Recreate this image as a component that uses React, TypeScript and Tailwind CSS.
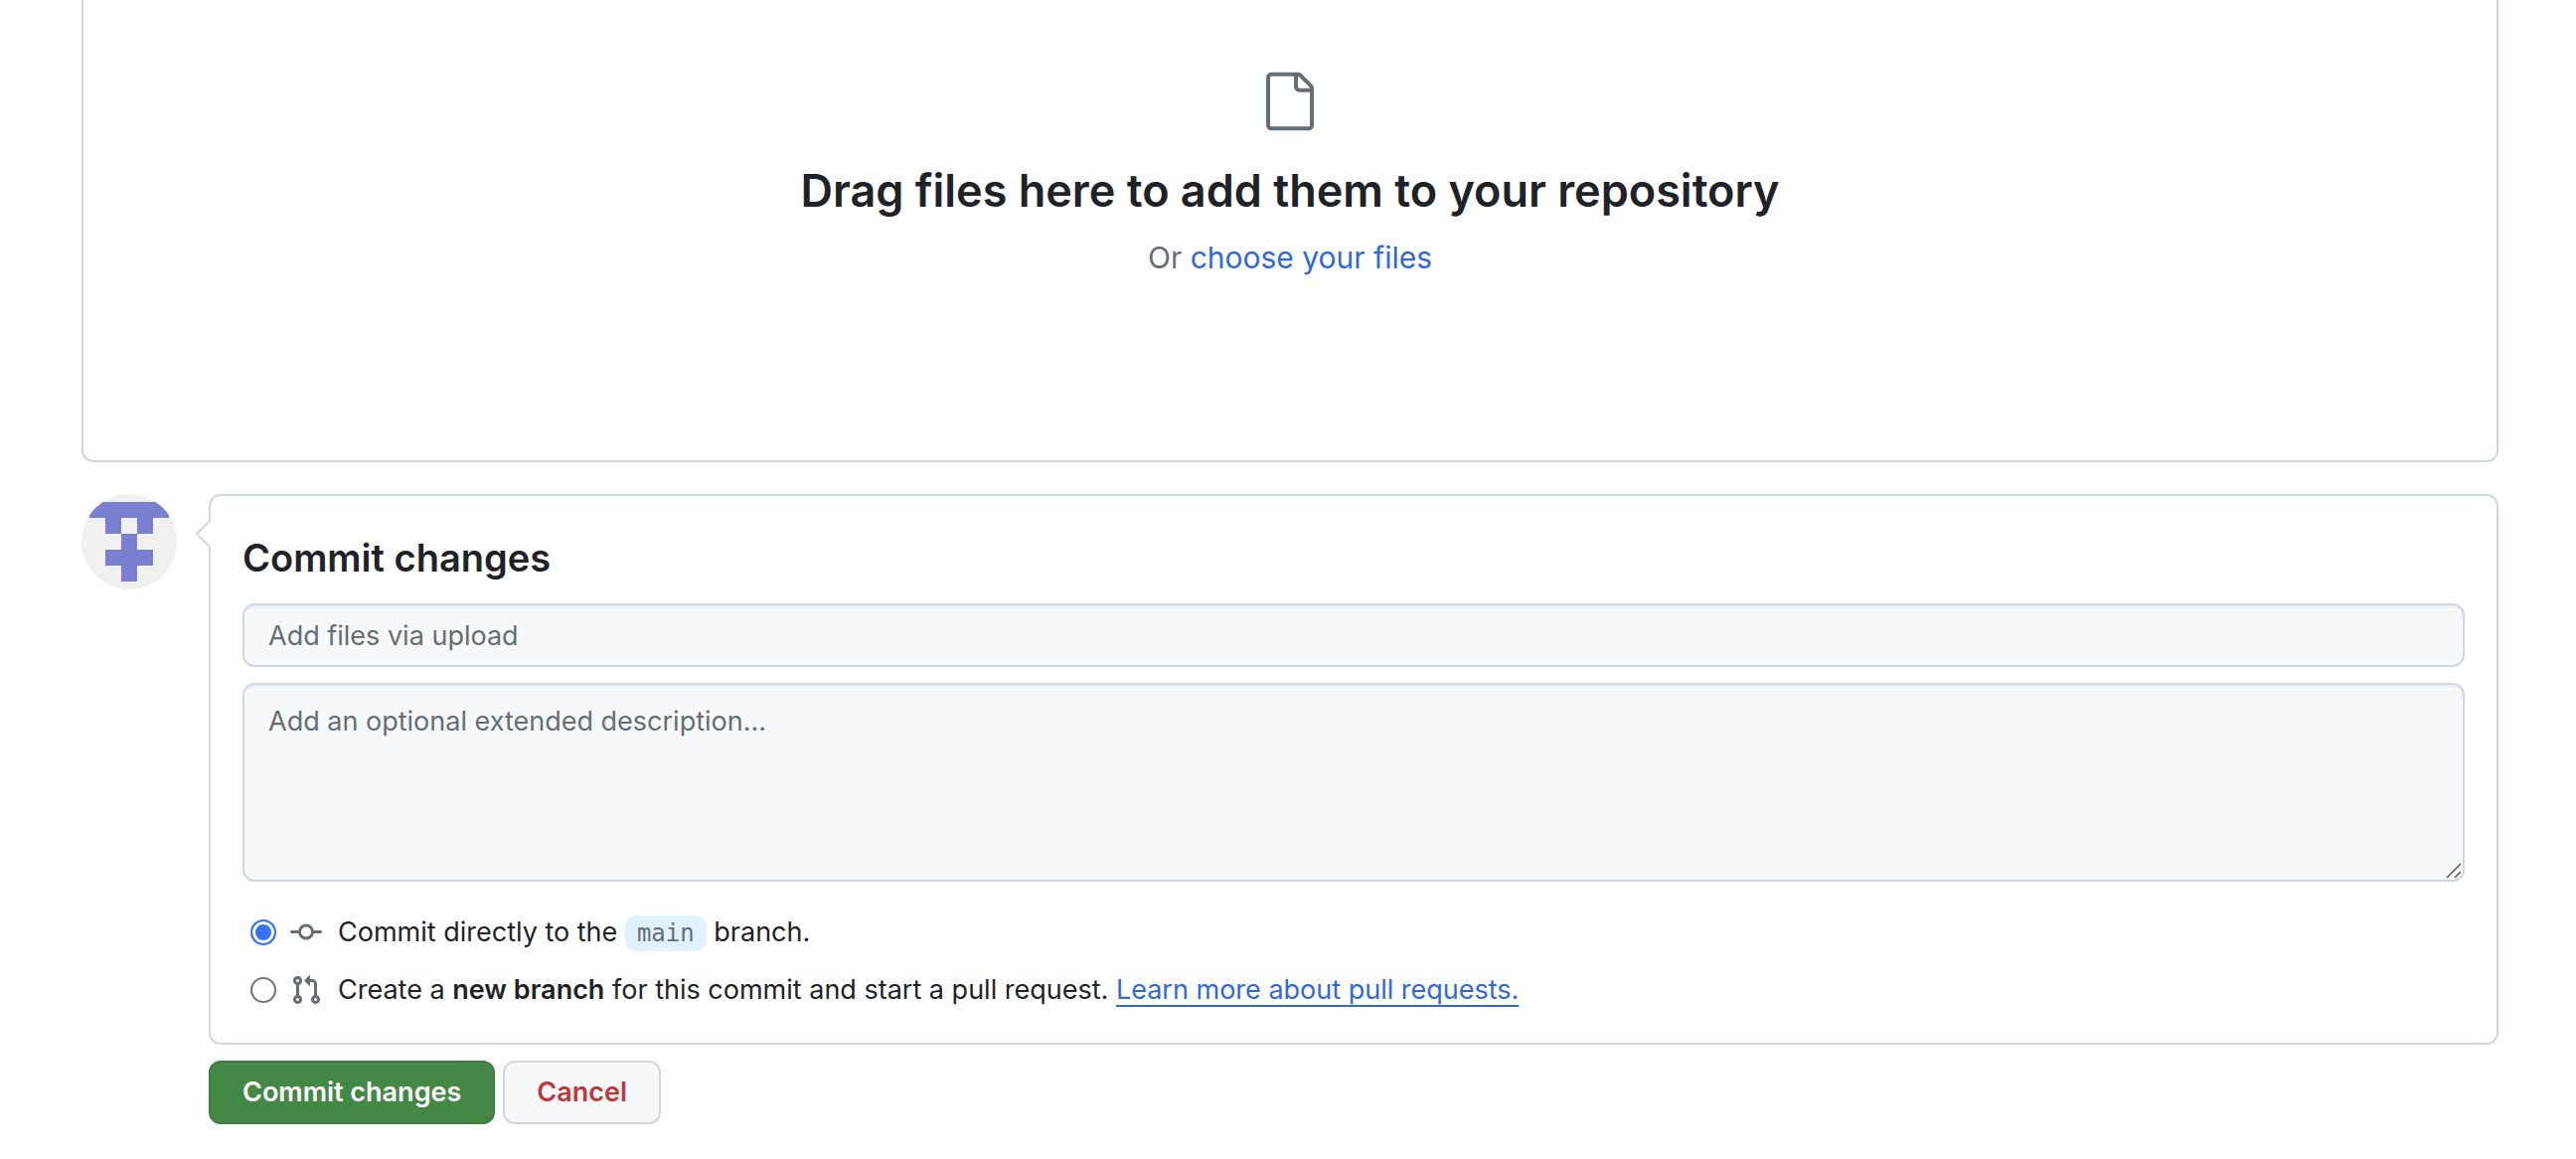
import { useState } from "react";
import type { ReactNode } from "react";

const IDENTICON = ["11111", "01010", "00100", "01110", "00100"];

function FileIcon() {
  return (
    <svg viewBox="0 0 24 24" className="size-16 fill-[#656d76]" aria-hidden="true">
      <path d="M3 3a2 2 0 0 1 2-2h9.982a2 2 0 0 1 1.414.586l4.018 4.018A2 2 0 0 1 21 7.018V21a2 2 0 0 1-2 2H5a2 2 0 0 1-2-2V3Zm2-.5a.5.5 0 0 0-.5.5v18a.5.5 0 0 0 .5.5h14a.5.5 0 0 0 .5-.5V8.5h-4a2 2 0 0 1-2-2v-4H5Zm10 0v4a.5.5 0 0 0 .5.5h4a.5.5 0 0 0-.146-.336l-4.018-4.018A.5.5 0 0 0 15 2.5Z" />
    </svg>
  );
}

function CommitIcon() {
  return (
    <svg viewBox="0 0 16 16" className="size-8 shrink-0 fill-[#656d76]" aria-hidden="true">
      <path d="M11.93 8.5a4.002 4.002 0 0 1-7.86 0H.75a.75.75 0 0 1 0-1.5h3.32a4.002 4.002 0 0 1 7.86 0h3.32a.75.75 0 0 1 0 1.5Zm-1.43-.75a2.5 2.5 0 1 0-5 0 2.5 2.5 0 0 0 5 0Z" />
    </svg>
  );
}

function PullRequestIcon() {
  return (
    <svg viewBox="0 0 16 16" className="size-8 shrink-0 fill-[#656d76]" aria-hidden="true">
      <path d="M1.5 3.25a2.25 2.25 0 1 1 3 2.122v5.256a2.251 2.251 0 1 1-1.5 0V5.372A2.25 2.25 0 0 1 1.5 3.25Zm5.677-.177L9.573.677A.25.25 0 0 1 10 .854V2.5h1A2.5 2.5 0 0 1 13.5 5v5.628a2.251 2.251 0 1 1-1.5 0V5a1 1 0 0 0-1-1h-1v1.646a.25.25 0 0 1-.427.177L7.177 3.427a.25.25 0 0 1 0-.354ZM3.75 2.5a.75.75 0 1 0 0 1.5.75.75 0 0 0 0-1.5Zm0 9.5a.75.75 0 1 0 0 1.5.75.75 0 0 0 0-1.5Zm8.25.75a.75.75 0 1 0 1.5 0 .75.75 0 0 0-1.5 0Z" />
    </svg>
  );
}

function Avatar() {
  return (
    <svg viewBox="0 0 96 96" className="size-24 shrink-0 rounded-full bg-[#f0f0f0]" role="img" aria-label="Your avatar">
      {IDENTICON.flatMap((row, y) =>
        [...row].map((cell, x) =>
          cell === "1" ? (
            <rect key={`${x}-${y}`} x={8 + x * 16} y={8 + y * 16} width="16" height="16" fill="#7a80d0" />
          ) : null,
        ),
      )}
    </svg>
  );
}

function Choice({ id, checked, onSelect, icon, children }: {
  id: string;
  checked: boolean;
  onSelect: () => void;
  icon: ReactNode;
  children: ReactNode;
}) {
  return (
    <div className="flex items-center pl-2">
      <input
        type="radio"
        name="commit-target"
        id={id}
        checked={checked}
        onChange={onSelect}
        className="mr-[14px] size-[26px] shrink-0 appearance-none rounded-full border-2 border-[#767676] bg-white checked:border-[#3574f6] checked:bg-[#3574f6] checked:shadow-[inset_0_0_0_3px_#ffffff]"
      />
      {icon}
      <label htmlFor={id} className="ml-4 leading-[42px]">
        {children}
      </label>
    </div>
  );
}

export default function App() {
  const [target, setTarget] = useState("direct");

  return (
    <main className="bg-white pr-[78px] pl-[82px] font-[family-name:Inter,sans-serif] text-[27px] text-[#1f2328]">
      <section className="flex flex-col items-center rounded-b-xl border-2 border-t-0 border-[#d0d7de] pt-[70px] pb-[180px] text-center">
        <FileIcon />
        <h2 className="mt-7 mb-[13px] text-[45px] leading-[60px] font-semibold">
          Drag files here to add them to your repository
        </h2>
        <p className="text-[30px] leading-[48px] text-[#656d76]">
          Or{" "}
          <a href="#files" className="text-[#2f68dc]">
            choose your files
          </a>
        </p>
      </section>

      <form className="mt-8 flex items-start gap-8" onSubmit={(e) => e.preventDefault()}>
        <Avatar />
        <div className="min-w-0 flex-1">
          <div className="relative rounded-xl border-2 border-[#d0d7de] p-8">
            <svg viewBox="0 0 16 30" className="absolute top-[23px] -left-[16px] h-[30px] w-[16px]" aria-hidden="true">
              <path d="M16 1 2 15l14 14Z" fill="#ffffff" />
              <path d="M15.500 1.500 2 15l13.500 13.500" fill="none" stroke="#d0d7de" strokeWidth="2" />
            </svg>
            <h3 className="mb-4 text-[38px] leading-[60px] font-semibold">Commit changes</h3>
            <input
              type="text"
              aria-label="Commit message"
              placeholder="Add files via upload"
              className="block h-16 w-full rounded-xl border-2 border-[#d0d7de] bg-[#f6f8fa] px-6 shadow-[inset_0_2px_0_#eaeef2] placeholder:text-[#656d76]"
            />
            <div className="relative mt-4">
              <textarea
                aria-label="Extended description"
                placeholder="Add an optional extended description..."
                className="block h-[200px] w-full resize-none rounded-xl border-2 border-[#d0d7de] bg-[#f6f8fa] px-6 py-4 leading-[42px] shadow-[inset_0_2px_0_#eaeef2] placeholder:text-[#656d76]"
              />
              <svg viewBox="0 0 16 16" className="pointer-events-none absolute right-[3px] bottom-[3px] size-4" aria-hidden="true">
                <path d="M1 15 15 1M9 15l6-6" fill="none" stroke="#555555" strokeWidth="1.500" />
              </svg>
            </div>
            <div className="mt-[30px] flex flex-col gap-4">
              <Choice id="direct" checked={target === "direct"} onSelect={() => setTarget("direct")} icon={<CommitIcon />}>
                Commit directly to the{" "}
                <code className="rounded-xl bg-[#e0f2ff] px-3 py-1 font-[family-name:DejaVu_Sans_Mono,monospace] text-[24px] leading-none text-[#656d76]">
                  main
                </code>{" "}
                branch.
              </Choice>
              <Choice id="branch" checked={target === "branch"} onSelect={() => setTarget("branch")} icon={<PullRequestIcon />}>
                Create a <strong className="font-semibold">new branch</strong> for this commit and start a pull request.{" "}
                <a
                  href="#pull-requests"
                  className="text-[#2f68dc] underline decoration-2 underline-offset-[6px] [text-decoration-skip-ink:none]"
                >
                  Learn more about pull requests.
                </a>
              </Choice>
            </div>
          </div>
          <div className="mt-4 flex gap-2">
            <button type="submit" className="h-16 rounded-xl border-2 border-[#3e7d42] bg-[#448846] px-8 font-semibold text-white">
              Commit changes
            </button>
            <button type="button" className="h-16 rounded-xl border-2 border-[#d0d7de] bg-[#f6f8fa] px-8 font-semibold text-[#c03639]">
              Cancel
            </button>
          </div>
        </div>
      </form>
    </main>
  );
}
